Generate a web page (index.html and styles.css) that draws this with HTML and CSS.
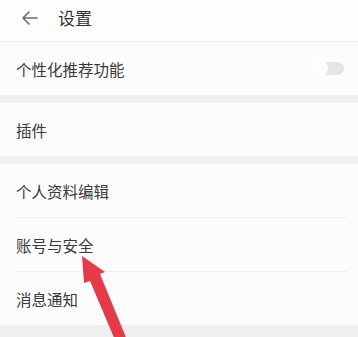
FILE: index.html
```html
<!DOCTYPE html>
<html lang="zh">
<head>
<meta charset="utf-8">
<link rel="stylesheet" href="styles.css">
</head>
<body>
<div class="page">
  <header class="topbar">
    <svg class="back" width="18" height="14" viewBox="0 0 18 14"><path d="M8 1 L2 7 L8 13 M2 7 H16" fill="none" stroke="#6b6b6b" stroke-width="1.6" stroke-linecap="round" stroke-linejoin="round"/></svg>
    <span class="title">设置</span>
  </header>
  <section class="group">
    <div class="row"><span>个性化推荐功能</span><span class="toggle"><span class="knob"></span></span></div>
  </section>
  <section class="group">
    <div class="row"><span>插件</span></div>
  </section>
  <section class="group">
    <div class="row divided"><span>个人资料编辑</span></div>
    <div class="row divided"><span>账号与安全</span></div>
    <div class="row"><span>消息通知</span></div>
  </section>
  <svg class="pointer" width="358" height="337" viewBox="0 0 358 337"><polygon points="82,256 105,272 100,274 127,340 115,340 90,281 84,283" fill="#e63a48"/></svg>
</div>
</body>
</html>
```
FILE: styles.css
```css
html, body { margin: 0; padding: 0; }
body { background: #efefef; font-family: "Noto Sans CJK SC", "Noto Sans", sans-serif; }
.page { position: relative; width: 358px; height: 337px; overflow: hidden; background: #efefef; }
.topbar { height: 41px; background: #fdfdfd; border-bottom: 1px solid #ebebeb; display: flex; align-items: center; padding-left: 21px; box-sizing: content-box; }
.back { margin-right: 19px; margin-top: 2px; }
.title { font-size: 17px; color: #333; margin-top: -6px; }
.back { margin-top: -6px; }
.group { background: #fcfcfc; margin-bottom: 8px; }
.row { height: 53px; display: flex; align-items: center; justify-content: space-between; margin-left: 16px; margin-right: 11px; font-size: 15.5px; color: #3a3a3a; }
.row.divided { border-bottom: 1px solid #efefef; }
.toggle { position: relative; width: 34px; height: 13px; border-radius: 7px; background: #e5e5e5; margin-right: 3px; }
.knob { position: absolute; left: -1px; top: -3px; width: 19px; height: 19px; border-radius: 50%; background: #fdfdfd; box-shadow: 0 0 1px rgba(0,0,0,0.06); }
.pointer { position: absolute; left: 0; top: 0; }
```
